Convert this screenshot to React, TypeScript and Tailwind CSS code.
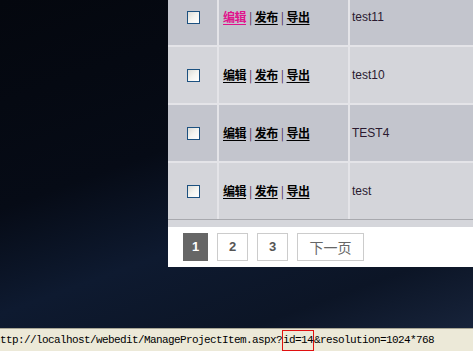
import React from 'react'

const ROWS = [
  { name: 'test11', dark: true, active: true },
  { name: 'test10', dark: false, active: false },
  { name: 'TEST4', dark: true, active: false },
  { name: 'test', dark: false, active: false },
]

function Checkbox() {
  return (
    <span className="block w-[13px] h-[13px] border border-[#1c5180] bg-gradient-to-br from-[#dcdcd7] via-[#f4f4f0] to-white" />
  )
}

function Actions({ active }: { active: boolean }) {
  const link = 'font-bold underline underline-offset-2'
  return (
    <span className="text-[12px] text-[#111] [font-family:'Noto_Sans_CJK_SC',sans-serif] tracking-[-0.5px]">
      <span className={`${link} ${active ? 'text-[#e0138c]' : 'text-black'}`}>编辑</span>
      <span className="text-[#4a2a55] mx-[3px]">|</span>
      <span className={`${link} text-black`}>发布</span>
      <span className="text-[#4a2a55] mx-[3px]">|</span>
      <span className={`${link} text-black`}>导出</span>
    </span>
  )
}

export default function App() {
  return (
    <div className="w-[473px] h-[351px] overflow-hidden flex flex-col bg-[linear-gradient(160deg,#04070e_0%,#060b16_40%,#0e1a30_60%,#0c1526_80%,#1a2740_100%)]">
      <div className="flex-1 flex flex-col overflow-hidden">
        {/* panel */}
        <div className="ml-[168px] -mt-[11px] w-[305px] bg-white flex flex-col">
          {ROWS.map((r) => (
            <div
              key={r.name}
              className={`flex h-[58px] border-b-2 border-[#e4e4e8] ${r.dark ? 'bg-[#c3c5cd]' : 'bg-[#d4d5da]'}`}
            >
              <div className="w-[51px] flex items-center justify-center border-r-2 border-[#e4e4e8] pl-[1px]">
                <Checkbox />
              </div>
              <div className="w-[131px] flex items-center pl-[4px] border-r-2 border-[#e4e4e8]">
                <Actions active={r.active} />
              </div>
              <div className="flex-1 flex items-center pl-[2px] text-[12px] text-[#2a1a30] [font-family:Arial,'Liberation_Sans',sans-serif]">
                {r.name}
              </div>
            </div>
          ))}
          <div className="h-[8px] bg-[#d5d6db] border-t border-[#a8a9ae] -mt-[2px]" />
          <div className="h-[40px] flex items-center gap-[9px] pl-[15px] [font-family:Arial,'Liberation_Sans',sans-serif]">
            <span className="w-[25px] h-[28px] bg-[#666] text-white font-bold text-[13px] flex items-center justify-center">1</span>
            <span className="w-[31px] h-[28px] border border-[#ccc] text-[#555] font-bold text-[13px] flex items-center justify-center">2</span>
            <span className="w-[31px] h-[28px] border border-[#ccc] text-[#555] font-bold text-[13px] flex items-center justify-center">3</span>
            <span className="w-[67px] h-[28px] border border-[#ccc] text-[#666] text-[14px] flex items-center justify-center [font-family:'Noto_Sans_CJK_SC',sans-serif]">下一页</span>
          </div>
        </div>
      </div>
      {/* status bar */}
      <div className="h-[23px] bg-[#ece9d8] border-t border-[#a7a595] flex items-center overflow-hidden whitespace-nowrap">
        <span className="-ml-[6px] text-[11px] tracking-[-0.6px] text-black [font-family:'Liberation_Mono',monospace]">
          http://localhost/webedit/ManageProjectItem.aspx?
          <span className="inline-block border border-[#e01010] py-[3px] leading-[13px]">id=14</span>
          &amp;resolution=1024*768
        </span>
      </div>
    </div>
  )
}
